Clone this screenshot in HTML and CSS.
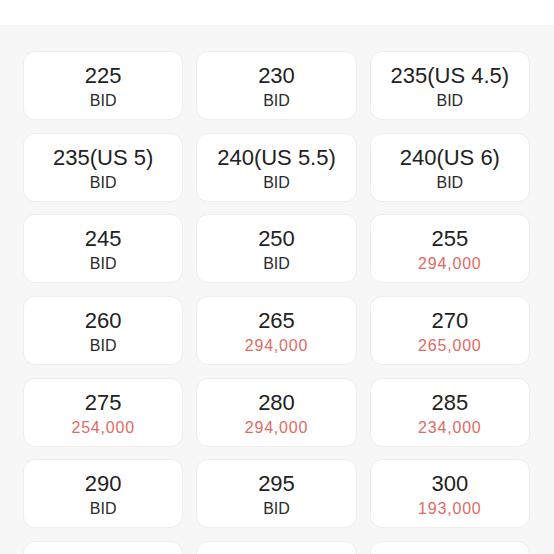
FILE: index.html
```html
<!DOCTYPE html>
<html>
<head>
<meta charset="utf-8">
<link rel="stylesheet" href="styles.css">
</head>
<body>
<div class="topbar"></div>
<section class="sizes">
  <div class="grid">
    <div class="card"><div class="size">225</div><div class="price">BID</div></div>
    <div class="card"><div class="size">230</div><div class="price">BID</div></div>
    <div class="card"><div class="size">235(US 4.5)</div><div class="price">BID</div></div>
    <div class="card"><div class="size">235(US 5)</div><div class="price">BID</div></div>
    <div class="card"><div class="size">240(US 5.5)</div><div class="price">BID</div></div>
    <div class="card"><div class="size">240(US 6)</div><div class="price">BID</div></div>
    <div class="card"><div class="size">245</div><div class="price">BID</div></div>
    <div class="card"><div class="size">250</div><div class="price">BID</div></div>
    <div class="card"><div class="size">255</div><div class="price red">294,000</div></div>
    <div class="card"><div class="size">260</div><div class="price">BID</div></div>
    <div class="card"><div class="size">265</div><div class="price red">294,000</div></div>
    <div class="card"><div class="size">270</div><div class="price red">265,000</div></div>
    <div class="card"><div class="size">275</div><div class="price red">254,000</div></div>
    <div class="card"><div class="size">280</div><div class="price red">294,000</div></div>
    <div class="card"><div class="size">285</div><div class="price red">234,000</div></div>
    <div class="card"><div class="size">290</div><div class="price">BID</div></div>
    <div class="card"><div class="size">295</div><div class="price">BID</div></div>
    <div class="card"><div class="size">300</div><div class="price red">193,000</div></div>
    <div class="card"></div>
    <div class="card"></div>
    <div class="card"></div>
  </div>
</section>
</body>
</html>
```
FILE: styles.css
```css
html, body {
  margin: 0;
  padding: 0;
  background: #f7f7f7;
  font-family: "Liberation Sans", Arial, sans-serif;
  color: #222;
  overflow: hidden;
}
.topbar {
  height: 25px;
  background: #fff;
}
.sizes {
  background: #f7f7f7;
  padding: 26px 24px 20px 23px;
}
.grid {
  display: grid;
  grid-template-columns: repeat(3, 1fr);
  column-gap: 13px;
  row-gap: 12.7px;
}
.card {
  height: 69px;
  box-sizing: border-box;
  padding-top: 4px;
  background: #fff;
  border: 1px solid #ededed;
  border-radius: 12px;
  display: flex;
  flex-direction: column;
  align-items: center;
  justify-content: center;
}
.size {
  font-size: 22px;
  line-height: 24px;
  color: #222;
}
.price {
  margin-top: 2px;
  font-size: 16px;
  line-height: 21px;
  color: #2a2a2a;
}
.price.red {
  color: #e06a65;
  letter-spacing: 0.8px;
}
```
